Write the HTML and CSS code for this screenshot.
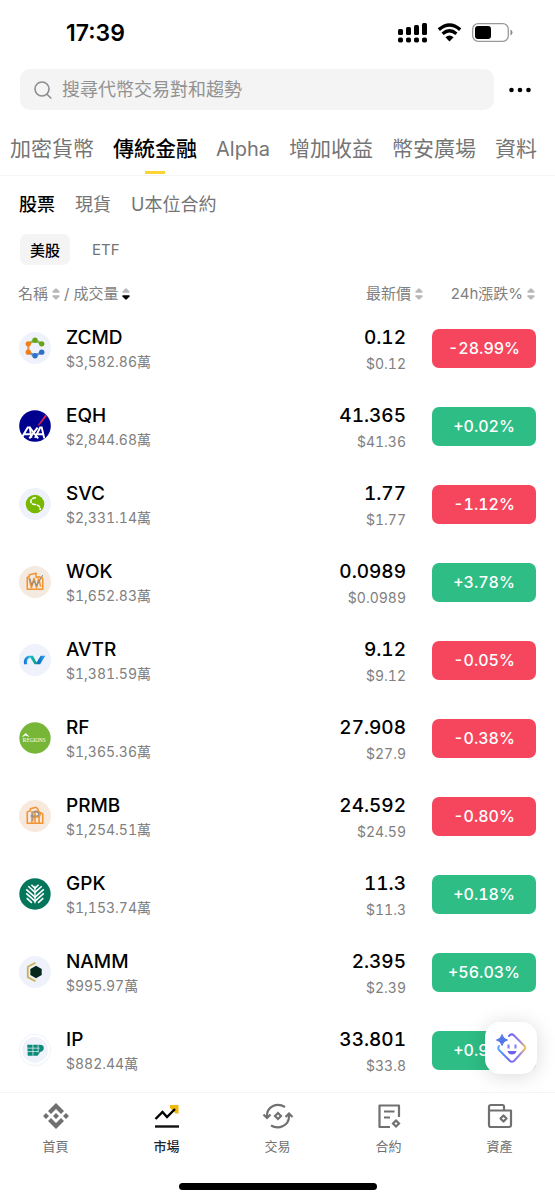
FILE: index.html
```html
<!doctype html>
<html lang="zh-Hant">
  <head>
    <meta charset="UTF-8" />
    <meta name="viewport" content="width=device-width, initial-scale=1" />
    <title>市場</title>
    <link rel="stylesheet" href="styles.css" />
  </head>
  <body>
    <svg class="defs" aria-hidden="true">
      <symbol id="sort" viewBox="0 0 8 12">
        <path class="arrow-up" d="M3.2 .7Q4 0 4.8 .7L7.6 3.6Q8 4.7 7 4.8H1Q0 4.7 .4 3.6Z" />
        <path class="arrow-down" d="M3.2 11.3Q4 12 4.8 11.3L7.6 8.4Q8 7.3 7 7.2H1Q0 7.3 .4 8.4Z" />
      </symbol>
    </svg>

    <div class="status-bar">
      <span class="time">17:39</span>
      <div class="status-icons">
        <svg width="29" height="20" viewBox="0 0 29 20">
          <rect x="0" y="6" width="5" height="6" rx="1.5" />
          <rect x="8" y="4" width="5" height="8" rx="1.5" />
          <rect x="16" y="2" width="5" height="10" rx="1.5" />
          <rect x="24" y="0" width="5" height="12" rx="1.5" />
          <rect x="0" y="14.5" width="5" height="5" rx="1.8" />
          <rect x="8" y="14.5" width="5" height="5" rx="1.8" />
          <rect x="16" y="14.5" width="5" height="5" rx="1.8" />
          <rect x="24" y="14.5" width="5" height="5" rx="1.8" />
        </svg>
        <svg width="25" height="19" viewBox="0 0 25 19">
          <path d="M1.8 6.6Q12.5 -2.8 23.2 6.6" fill="none" stroke="#000" stroke-width="3.4" />
          <path d="M5.6 10.7Q12.5 4.8 19.4 10.7" fill="none" stroke="#000" stroke-width="3.2" />
          <path d="M8.4 14.2Q12.5 11 16.6 14.2L12.5 18.5Z" />
        </svg>
        <svg width="41" height="20" viewBox="0 0 41 20">
          <rect x=".7" y=".7" width="35.6" height="17.6" rx="5.5" fill="none" stroke="#999" stroke-width="1.3" />
          <rect x="3" y="3" width="16" height="13" rx="3" />
          <path d="M38.5 6.5Q40.5 7.5 40.5 9.5T38.5 12.5Z" fill="#888" />
        </svg>
      </div>
    </div>

    <header class="search-row">
      <label class="search">
        <svg width="18" height="18" viewBox="0 0 18 18" fill="none" stroke="#8d8d8d" stroke-width="1.6" stroke-linecap="round">
          <circle cx="8" cy="8" r="7" />
          <path d="M13 13.2L16.8 17" />
        </svg>
        <input type="search" placeholder="搜尋代幣交易對和趨勢" aria-label="搜尋" />
      </label>
      <button class="more" aria-label="更多">
        <svg width="22" height="6" viewBox="0 0 22 6">
          <circle cx="2.5" cy="3" r="2.3" />
          <circle cx="11" cy="3" r="2.3" />
          <circle cx="19.5" cy="3" r="2.3" />
        </svg>
      </button>
    </header>

    <nav class="tabs">
      <a href="#">加密貨幣</a>
      <a href="#" class="active">傳統金融</a>
      <a href="#" class="latin">Alpha</a>
      <a href="#">增加收益</a>
      <a href="#">幣安廣場</a>
      <a href="#">資料</a>
    </nav>

    <nav class="subtabs">
      <a href="#" class="active">股票</a>
      <a href="#">現貨</a>
      <a href="#">U本位合約</a>
    </nav>

    <div class="filters">
      <button class="active">美股</button>
      <button>ETF</button>
    </div>

    <main>
      <table class="market">
        <thead>
          <tr>
            <th class="col-name">
              <div class="heading">
                <button>名稱 <svg class="sort"><use href="#sort" /></svg></button>
                <span>/</span>
                <button>成交量 <svg class="sort desc"><use href="#sort" /></svg></button>
              </div>
            </th>
            <th class="col-price"><button>最新價 <svg class="sort"><use href="#sort" /></svg></button></th>
            <th class="col-change"><button>24h漲跌% <svg class="sort"><use href="#sort" /></svg></button></th>
          </tr>
        </thead>
        <tbody>
          <tr>
            <td>
              <div class="coin">
                <svg class="logo" viewBox="0 0 31 31">
                  <circle cx="15.5" cy="15.5" r="15.5" fill="#eff2fa" />
                  <g fill="none" stroke-width="2.4">
                    <path d="M9 11.5L15.5 8L22 11.5" stroke="#8db65b" />
                    <path d="M9 11.5V19.5" stroke="#eca25a" />
                    <path d="M9 19.5L15.5 23L22 19.5" stroke="#6b97cd" />
                  </g>
                  <circle cx="15.5" cy="8" r="2.6" fill="#65a515" />
                  <circle cx="22" cy="11.5" r="2.6" fill="#65a515" />
                  <circle cx="9" cy="11.5" r="2.6" fill="#ee7f16" />
                  <circle cx="9" cy="19.5" r="2.6" fill="#ee7f16" />
                  <circle cx="15.5" cy="23" r="2.6" fill="#2f6fc4" />
                  <circle cx="22" cy="19.5" r="2.6" fill="#2f6fc4" />
                </svg>
                <div><strong>ZCMD</strong><small>$3,582.86萬</small></div>
              </div>
            </td>
            <td class="price"><strong>0.12</strong><small>$0.12</small></td>
            <td class="change"><span class="badge down">-28.99%</span></td>
          </tr>
          <tr>
            <td>
              <div class="coin">
                <svg class="logo" viewBox="0 0 31 31">
                  <circle cx="15.5" cy="15.5" r="15.3" fill="#00008f" />
                  <path d="M18 15L25.5 4.5L27 5.8L19.5 15Z" fill="#e8204e" />
                  <g fill="none" stroke="#fff" stroke-width="1.9">
                    <path d="M2.5 27L8.5 17H10.5L12 27M5 23.5H11" />
                    <path d="M10.5 17L18.5 27.5M18 17L10 27.5" />
                    <path d="M15.5 27L20.5 17H22L24.5 27.5M18 23.5H23" />
                  </g>
                </svg>
                <div><strong>EQH</strong><small>$2,844.68萬</small></div>
              </div>
            </td>
            <td class="price"><strong>41.365</strong><small>$41.36</small></td>
            <td class="change"><span class="badge up">+0.02%</span></td>
          </tr>
          <tr>
            <td>
              <div class="coin">
                <svg class="logo" viewBox="0 0 31 31">
                  <circle cx="15.5" cy="15.5" r="15.5" fill="#eff2fa" />
                  <circle cx="15.5" cy="15.5" r="9" fill="#78b800" />
                  <path d="M16.5 9.5Q11.5 9.5 11.5 13Q11.5 15.8 15.5 16Q21 16.5 20.5 21.5" fill="none" stroke="#fff" stroke-width="1.5" stroke-dasharray="4 .7" />
                </svg>
                <div><strong>SVC</strong><small>$2,331.14萬</small></div>
              </div>
            </td>
            <td class="price"><strong>1.77</strong><small>$1.77</small></td>
            <td class="change"><span class="badge down">-1.12%</span></td>
          </tr>
          <tr>
            <td>
              <div class="coin">
                <svg class="logo" viewBox="0 0 31 31">
                  <circle cx="15.5" cy="15.5" r="15.5" fill="#f5eadf" />
                  <g fill="none" stroke-linejoin="round">
                    <path d="M8 22.5V11L10 10V8.500L16.5 7V11L20 10.5L23 12V22.5Z" stroke="#f29432" stroke-width="1.5" />
                    <path d="M9.5 11L12 21L14.5 12L17 21L19 12L21 20" stroke="#f29432" stroke-width="1.5" />
                    <path d="M10.5 12L12.5 18.5L14.5 14L17 19L23 9" stroke="#8a8b8c" stroke-width="1" />
                  </g>
                </svg>
                <div><strong>WOK</strong><small>$1,652.83萬</small></div>
              </div>
            </td>
            <td class="price"><strong>0.0989</strong><small>$0.0989</small></td>
            <td class="change"><span class="badge up">+3.78%</span></td>
          </tr>
          <tr>
            <td>
              <div class="coin">
                <svg class="logo" viewBox="0 0 31 31">
                  <defs>
                    <linearGradient id="avtr">
                      <stop stop-color="#176bd0" />
                      <stop offset=".25" stop-color="#27bde8" />
                      <stop offset=".5" stop-color="#08a984" />
                      <stop offset=".7" stop-color="#126cc7" />
                      <stop offset="1" stop-color="#27b4ed" />
                    </linearGradient>
                  </defs>
                  <circle cx="15.5" cy="15.5" r="15.5" fill="#eff1fb" />
                  <path d="M5 19.5C4 16 6 12 9.5 11.5H13.5L17 18L21 11.5H25.5L20.5 19.5H15L11 13C8 14 7.5 16 8 19.5Z" fill="url(#avtr)" />
                </svg>
                <div><strong>AVTR</strong><small>$1,381.59萬</small></div>
              </div>
            </td>
            <td class="price"><strong>9.12</strong><small>$9.12</small></td>
            <td class="change"><span class="badge down">-0.05%</span></td>
          </tr>
          <tr>
            <td>
              <div class="coin">
                <svg class="logo" viewBox="0 0 31 31">
                  <circle cx="15.5" cy="15.5" r="15.2" fill="#77b637" />
                  <path d="M3.5 14L6.5 11L9.500 14L6.5 12.8Z" fill="#fff" stroke="#fff" stroke-width=".6" />
                  <text class="regions" x="3.5" y="19.8"><tspan class="initial">R</tspan>EGIONS</text>
                </svg>
                <div><strong>RF</strong><small>$1,365.36萬</small></div>
              </div>
            </td>
            <td class="price"><strong>27.908</strong><small>$27.9</small></td>
            <td class="change"><span class="badge down">-0.38%</span></td>
          </tr>
          <tr>
            <td>
              <div class="coin">
                <svg class="logo" viewBox="0 0 31 31">
                  <circle cx="15.5" cy="15.5" r="15.5" fill="#f8e9de" />
                  <g fill="none" stroke-linejoin="round">
                    <path d="M8 22.5V11.5L11 10.5V8.5L16.5 7L18.5 9V11L23 13.5V22.5ZM12.5 22V11M19.5 22V16" stroke="#f29432" stroke-width="1.5" />
                    <path d="M15.5 22V11H17.5Q20.5 11 20.5 13.5T17.5 16.5H12" stroke="#f29432" stroke-width="1.5" />
                    <path d="M13.5 20V11.5H17Q19 11.5 19 13.5T17 15.5H11" stroke="#8a8b8c" stroke-width="1" />
                  </g>
                </svg>
                <div><strong>PRMB</strong><small>$1,254.51萬</small></div>
              </div>
            </td>
            <td class="price"><strong>24.592</strong><small>$24.59</small></td>
            <td class="change"><span class="badge down">-0.80%</span></td>
          </tr>
          <tr>
            <td>
              <div class="coin">
                <svg class="logo" viewBox="0 0 31 31">
                  <circle cx="15.5" cy="15.5" r="15.2" fill="#04765b" />
                  <g fill="none" stroke="#fff" stroke-width="1.6">
                    <path d="M15.5 7.5V24.5" stroke-width="1.2" />
                    <path d="M12 6.5L15.5 10L19 6.5M9 8L15.5 14L22 8M7 11L15.5 18.5L24 11M7 15L15.5 22.5L24 15M7.5 19.500L12.500 24M23.5 19.5L18.5 24" />
                  </g>
                </svg>
                <div><strong>GPK</strong><small>$1,153.74萬</small></div>
              </div>
            </td>
            <td class="price"><strong>11.3</strong><small>$11.3</small></td>
            <td class="change"><span class="badge up">+0.18%</span></td>
          </tr>
          <tr>
            <td>
              <div class="coin">
                <svg class="logo" viewBox="0 0 31 31">
                  <circle cx="15.5" cy="15.5" r="15.5" fill="#eff2fa" />
                  <path d="M16 6.5L8.5 10.5V20.5L16 24.5" fill="none" stroke="#c9b14c" stroke-width="1.7" />
                  <path d="M16.5 9.5L22 12.5V18.5L16.5 21.5L11 18.5V12.5Z" fill="#06291c" />
                </svg>
                <div><strong>NAMM</strong><small>$995.97萬</small></div>
              </div>
            </td>
            <td class="price"><strong>2.395</strong><small>$2.39</small></td>
            <td class="change"><span class="badge up">+56.03%</span></td>
          </tr>
          <tr>
            <td>
              <div class="coin">
                <svg class="logo" viewBox="0 0 31 31">
                  <circle cx="15.5" cy="15.5" r="15" fill="#fff" stroke="#f1f3f9" />
                  <circle cx="15.5" cy="15.5" r="12.5" fill="#eff2fa" />
                  <path d="M8 10.5H20Q24 10.5 24 13.5T20.5 17.5L18 21H8.500Z" fill="#0b8a79" />
                  <path d="M8 13.7H20M8 17H19M13.5 10V21M18.5 10V18" fill="none" stroke="#eff2fa" stroke-width=".7" />
                </svg>
                <div><strong>IP</strong><small>$882.44萬</small></div>
              </div>
            </td>
            <td class="price"><strong>33.801</strong><small>$33.8</small></td>
            <td class="change"><span class="badge up">+0.98%</span></td>
          </tr>
        </tbody>
      </table>
    </main>

    <button class="assistant" aria-label="AI 助手">
      <svg width="32" height="32" viewBox="0 0 32 32" fill="none">
        <defs>
          <linearGradient id="face" x1="0" x2="1">
            <stop stop-color="#55a7ff" />
            <stop offset=".45" stop-color="#7063ee" />
            <stop offset=".8" stop-color="#9582f0" />
            <stop offset="1" stop-color="#f8bd54" />
          </linearGradient>
        </defs>
        <path d="M14 4L15 3Q17 1.5 19 3.5L29.5 14Q31 16 29.5 17.5L19 29Q17 30.5 15 29L4 18Q2.500 16 4 14" stroke="url(#face)" stroke-width="2" stroke-linecap="round" />
        <path d="M7 2.5Q8 7 12.5 8Q8 9 7 13.5Q6 9 1.5 8Q6 7 7 2.5Z" fill="#5277ec" stroke="#5277ec" />
        <path d="M13.5 12.5V16.500M20.500 12.5V16.500" stroke="#8d82f2" stroke-width="2.2" />
        <path d="M12.5 19H21.500Q20.500 22.500 17 22.500T12.5 19Z" fill="#6f61ea" />
      </svg>
    </button>

    <footer>
      <nav class="bottom-nav">
        <a href="#">
          <svg viewBox="0 0 28 28" fill="#707070">
            <path d="M14 1L22 9L19 12L14 7L9 12L6 9ZM14 27L22 19L19 16L14 21L9 16L6 19ZM14 11L17 14L14 17L11 14ZM4 11L7 14L4 17L1 14ZM24 11L27 14L24 17L21 14Z" />
          </svg>
          首頁
        </a>
        <a href="#" class="active">
          <svg viewBox="0 0 28 28" fill="none" stroke-width="2.4">
            <path d="M17 3H25.5V11.5H22.5L17 6Z" fill="#f0b90b" />
            <path d="M2.5 17L9.5 10L14 15L22 7" stroke="#000" />
            <path d="M2 24.5H26" stroke="#111" />
          </svg>
          市場
        </a>
        <a href="#">
          <svg class="trade" viewBox="0 0 32 28" fill="none" stroke="#707070" stroke-width="2.2">
            <path d="M23 5Q17 1.5 11 4Q4.5 7 5 15M1.500 12.5L5 16L8.5 12.5" />
            <path d="M9 23.5Q15 27 21 24Q27.5 21 27 12.5M23.500 15L27 11.5L30.500 15" />
            <path d="M16 11L19 14L16 17L13 14Z" />
          </svg>
          交易
        </a>
        <a href="#">
          <svg viewBox="0 0 28 28" fill="none" stroke="#707070" stroke-width="2.2">
            <path d="M15 25H4.5V3.5H24V15M9 9.5H19.5M9 15.5H15" stroke-linejoin="round" />
            <path d="M21 18.5L24 21.5L21 24.5L18 21.5Z" />
          </svg>
          合約
        </a>
        <a href="#">
          <svg viewBox="0 0 28 28" fill="none" stroke="#707070" stroke-width="2.2" stroke-linejoin="round">
            <path d="M3 8V23Q3 25 5 25H23Q25 25 25 23V8.5H3V5Q3 3 5 3H16.5Q18 3 18 5V8" />
            <path d="M17.5 13.5L20.5 16.5L17.5 19.5L14.5 16.5Z" />
          </svg>
          資產
        </a>
      </nav>
      <div class="home-indicator"></div>
    </footer>
  </body>
</html>
```
FILE: styles.css
```css
* {
  box-sizing: border-box;
}

body {
  display: flex;
  flex-direction: column;
  min-height: 100vh;
  margin: 0;
  font-family: Inter, "Noto Sans CJK TC", sans-serif;
  background: #fff;
  color: #000;
}

a {
  color: inherit;
  text-decoration: none;
}

button {
  padding: 0;
  border: 0;
  background: none;
  color: inherit;
  font: inherit;
  cursor: pointer;
}

svg {
  flex: none;
}

.defs {
  position: absolute;
  width: 0;
  height: 0;
}

/* Status bar */
.status-bar {
  display: flex;
  align-items: center;
  justify-content: space-between;
  height: 69px;
  padding: 0 42px 4px 66px;
}

.time {
  font-size: 23px;
  font-weight: 600;
}

.status-icons {
  display: flex;
  align-items: center;
  gap: 10px;
}

/* Search */
.search-row {
  display: flex;
  align-items: center;
  gap: 15px;
  padding: 0 24px 0 20px;
}

.search {
  display: flex;
  flex: 1;
  align-items: center;
  gap: 10px;
  height: 41px;
  padding: 0 14px;
  border-radius: 10px;
  background: #f4f4f4;
}

.search input {
  flex: 1;
  min-width: 0;
  padding: 0;
  border: 0;
  outline: 0;
  background: none;
  font: inherit;
  font-size: 18px;
}

.search input::placeholder {
  color: #929292;
}

.more {
  display: flex;
}

/* Tabs */
.tabs {
  display: flex;
  gap: 19px;
  height: 66px;
  padding: 13px 10px 0;
  border-bottom: 1px solid #f4f4f4;
  color: #757575;
  font-size: 21px;
  line-height: 52px;
  white-space: nowrap;
}

.tabs a {
  position: relative;
}

.tabs .latin {
  font-size: 20px;
}

.tabs .active {
  color: #000;
  font-weight: 500;
}

.tabs .active::after {
  content: "";
  position: absolute;
  bottom: 1px;
  left: 50%;
  width: 20px;
  height: 3px;
  margin-left: -10px;
  background: #fcd535;
}

.subtabs {
  display: flex;
  gap: 20px;
  padding: 14px 19px 0;
  color: #757575;
  font-size: 18px;
  line-height: 30px;
}

.subtabs .active {
  color: #000;
  font-weight: 500;
}

.filters {
  display: flex;
  gap: 12px;
  padding: 14px 20px;
}

.filters button {
  height: 31px;
  padding: 0 10px;
  border-radius: 7px;
  color: #757575;
  font-size: 15px;
}

.filters .active {
  background: #f4f4f4;
  color: #000;
  font-weight: 500;
}

/* Market table */
main {
  flex: 1;
}

.market {
  width: 100%;
  border-collapse: collapse;
  font-variant-numeric: tabular-nums;
}

.market th {
  height: 30px;
  padding: 0;
  color: #808080;
  font-size: 15px;
  font-weight: 400;
  line-height: 22px;
  text-align: right;
}

.market th button {
  display: inline-flex;
  align-items: center;
  gap: 4px;
}

.market .col-name {
  padding-left: 18px;
}

.market .col-price {
  padding-right: 9px;
}

.market .col-change {
  width: 123px;
  padding-right: 20px;
  font-variant-numeric: normal;
}

.heading {
  display: flex;
  gap: 4px;
}

.sort {
  --down-color: #b8b8b8;
  width: 8px;
  height: 12px;
}

.sort.desc {
  --down-color: #000;
}

.arrow-up {
  fill: #b8b8b8;
}

.arrow-down {
  fill: var(--down-color);
}

.market td {
  height: 78px;
  padding: 0;
}

.market strong,
.market small {
  display: block;
}

.market strong {
  font-size: 19px;
  font-weight: 500;
  line-height: 24px;
}

.market small {
  color: #808080;
  font-size: 14px;
  line-height: 24px;
}

.coin {
  display: flex;
  align-items: center;
  gap: 15px;
  padding-left: 19px;
}

.coin div {
  padding-top: 4px;
}

.logo {
  width: 32px;
  height: 32px;
}

.regions {
  fill: #fff;
  font-family: "Liberation Serif", serif;
  font-size: 5px;
}

.regions .initial {
  font-size: 6px;
}

.market .price {
  padding-top: 8px;
  padding-right: 26px;
  text-align: right;
}

.price small {
  line-height: 28px;
}

.badge {
  display: flex;
  align-items: center;
  justify-content: center;
  width: 104px;
  height: 39px;
  border-radius: 7px;
  color: #fff;
  font-size: 16px;
  font-weight: 500;
}

.up {
  background: #2ebd85;
}

.down {
  background: #f6465d;
}

.assistant {
  position: fixed;
  right: 18px;
  bottom: 126px;
  display: flex;
  align-items: center;
  justify-content: center;
  width: 52px;
  height: 52px;
  border-radius: 15px;
  background: #fff;
  box-shadow: 0 2px 20px rgba(0, 0, 0, 0.15);
}

/* Bottom navigation */
footer {
  position: sticky;
  bottom: 0;
  height: 108px;
  border-top: 1px solid #f4f4f4;
  background: #fff;
}

.bottom-nav {
  display: grid;
  grid-template-columns: repeat(5, 1fr);
  height: 90px;
  padding-top: 9px;
}

.bottom-nav a {
  display: flex;
  flex-direction: column;
  align-items: center;
  gap: 6px;
  color: #707070;
  font-size: 13px;
  line-height: 20px;
}

.bottom-nav .active {
  color: #202630;
  font-weight: 500;
}

.bottom-nav svg {
  width: 28px;
  height: 28px;
}

.bottom-nav .trade {
  width: 32px;
}

.home-indicator {
  width: 198px;
  height: 7px;
  margin: 0 auto;
  border-radius: 4px;
  background: #000;
}
```
